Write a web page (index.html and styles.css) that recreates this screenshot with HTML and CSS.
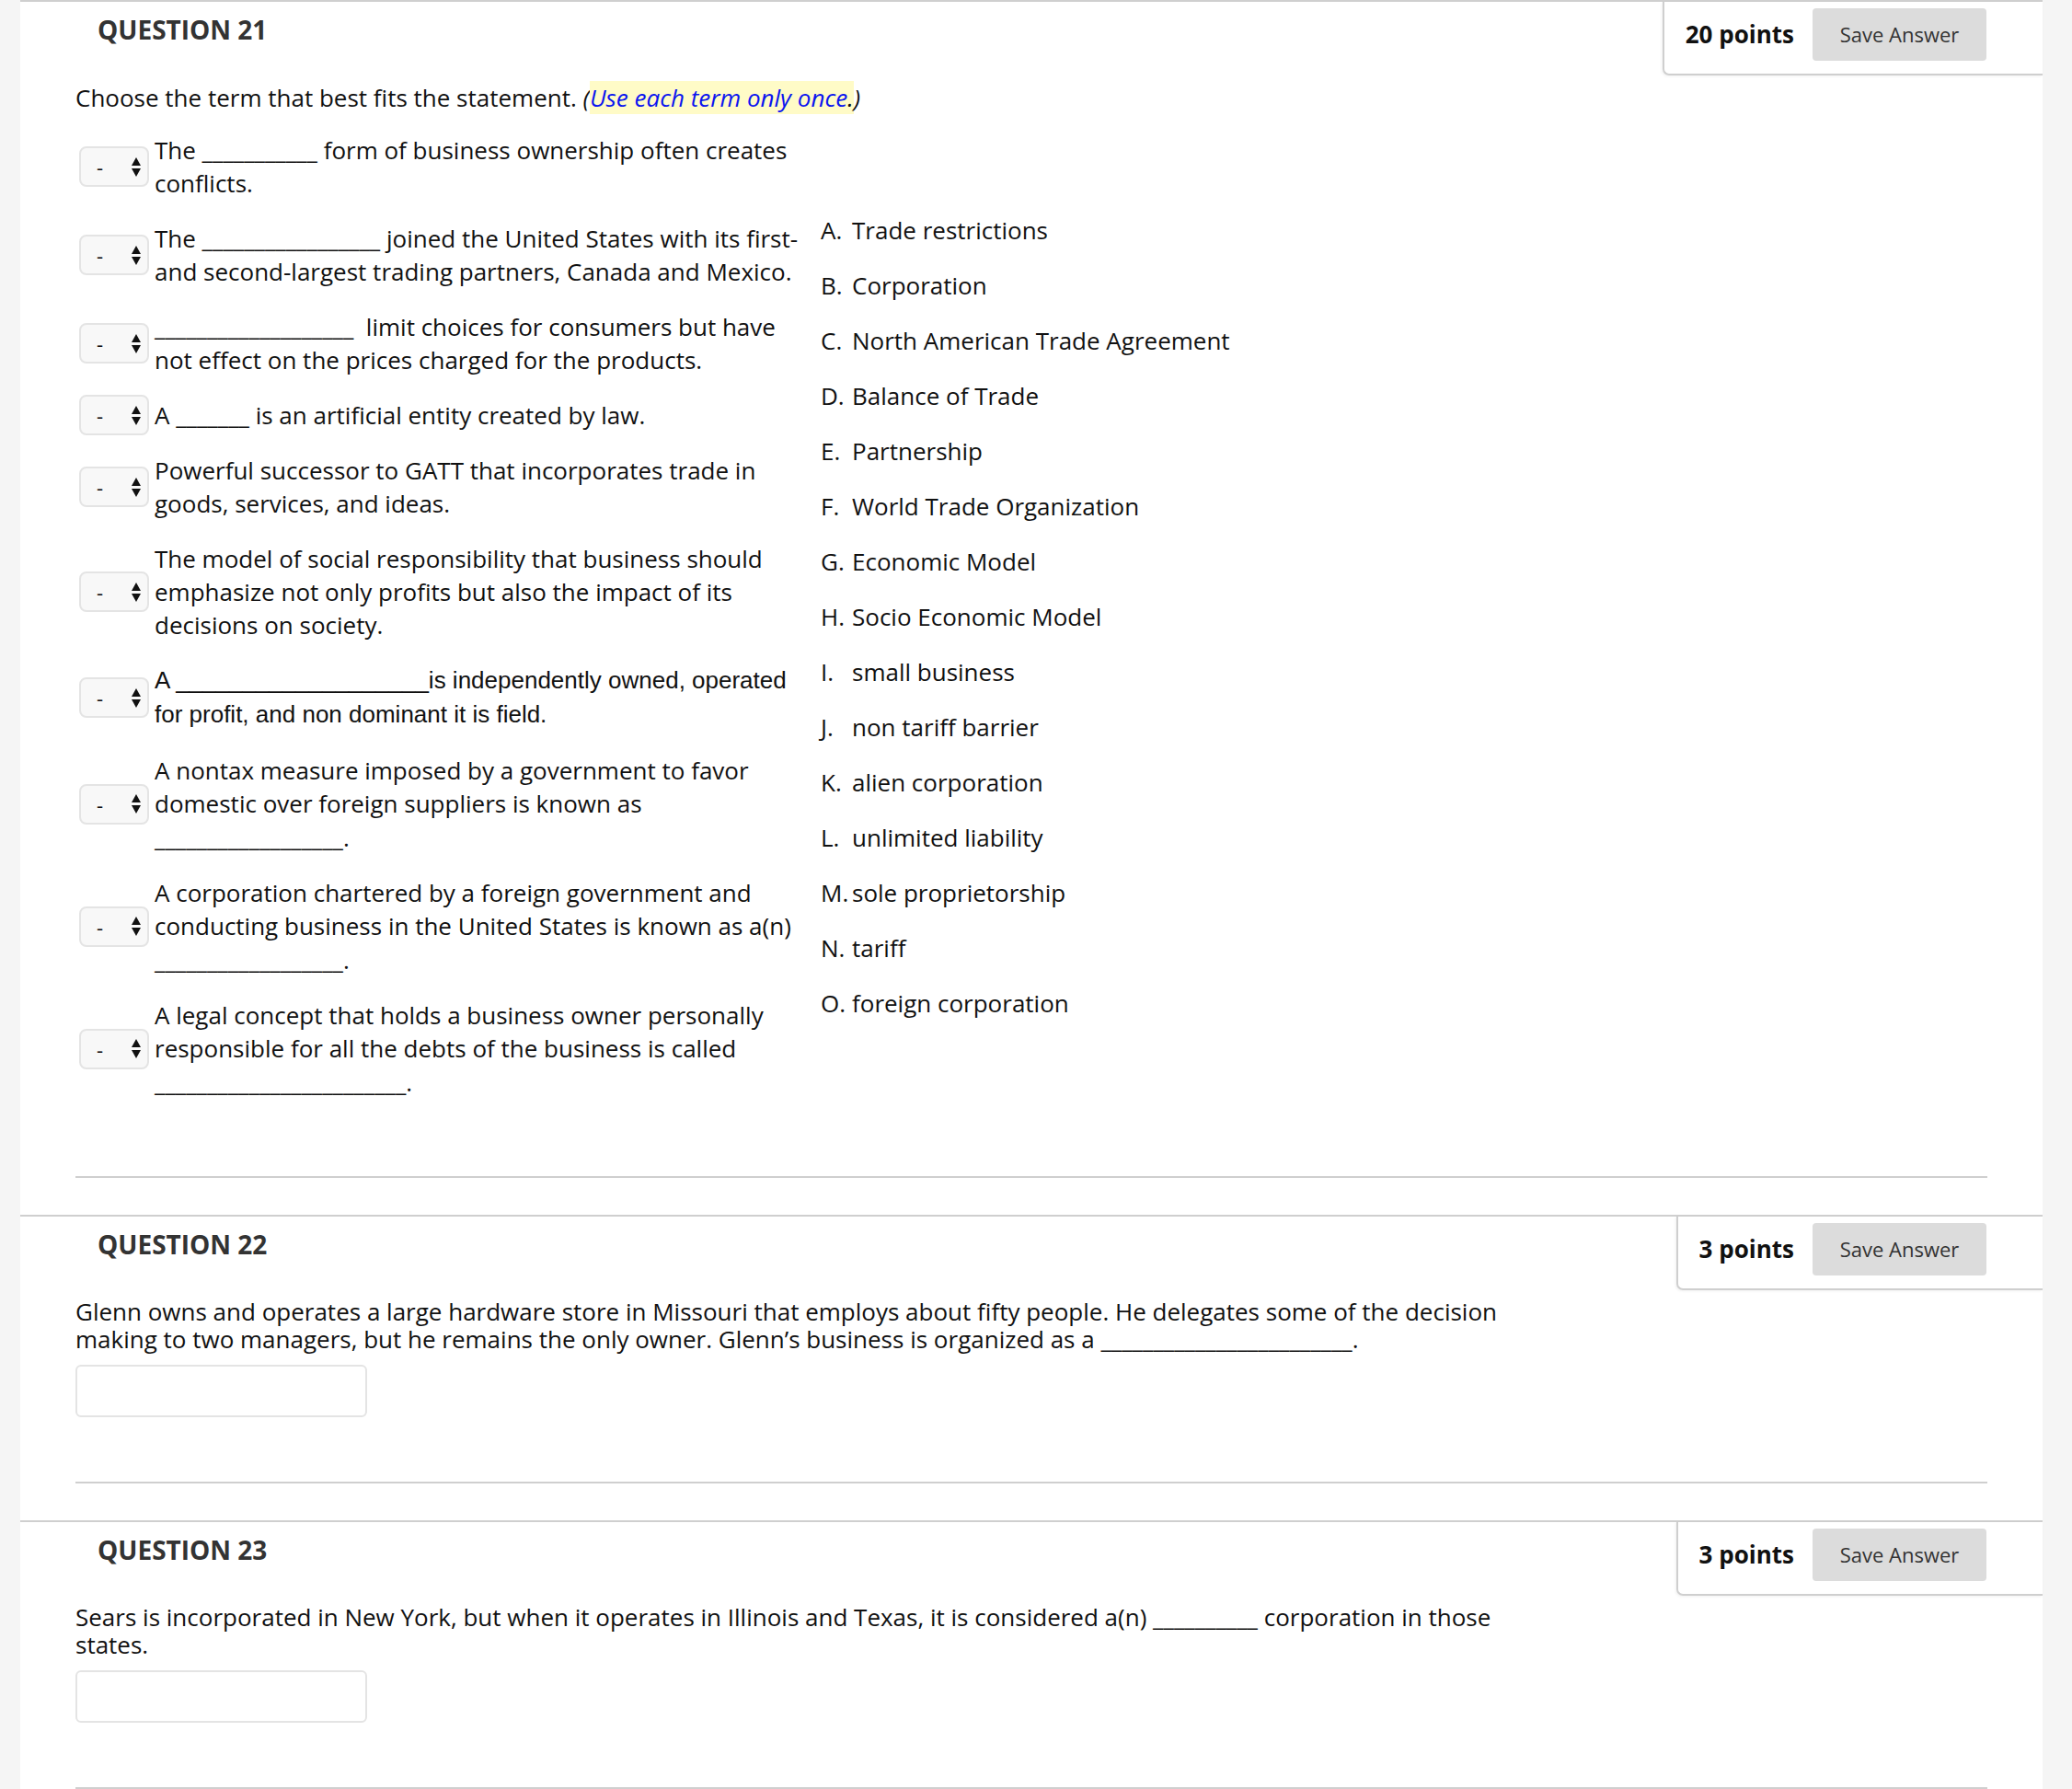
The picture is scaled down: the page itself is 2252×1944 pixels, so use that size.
FILE: index.html
```html
<!DOCTYPE html>
<html lang="en">
<head>
<meta charset="utf-8">
<title>Questions</title>
<link rel="stylesheet" href="styles.css">
</head>
<body>
<div class="page">

  <section class="question">
    <div class="q-head">
      <h3 class="q-title">QUESTION 21</h3>
      <div class="points-box">
        <span class="points">20 points</span>
        <span class="save-btn">Save Answer</span>
      </div>
    </div>
    <div class="q-body">
      <p class="instr">Choose the term that best fits the statement. <em>(<span class="hl"><a class="link" href="#">Use each term only once</a>.</span>)</em></p>

      <div class="match">
        <div class="prompts">
          <div class="prow">
            <span class="sel"><span class="dash">-</span><svg class="arr" width="12" height="23" viewBox="0 0 12 23"><path d="M6 1L11 10H1Z M1 13H11L6 22Z" fill="#111"/></svg></span>
            <div class="ptext">The ___________ form of business ownership often creates conflicts.</div>
          </div>
          <div class="prow">
            <span class="sel"><span class="dash">-</span><svg class="arr" width="12" height="23" viewBox="0 0 12 23"><path d="M6 1L11 10H1Z M1 13H11L6 22Z" fill="#111"/></svg></span>
            <div class="ptext">The _________________ joined the United States with its first-and second-largest trading partners, Canada and Mexico.</div>
          </div>
          <div class="prow">
            <span class="sel"><span class="dash">-</span><svg class="arr" width="12" height="23" viewBox="0 0 12 23"><path d="M6 1L11 10H1Z M1 13H11L6 22Z" fill="#111"/></svg></span>
            <div class="ptext">___________________&nbsp; limit choices for consumers but have not effect on the prices charged for the products.</div>
          </div>
          <div class="prow">
            <span class="sel"><span class="dash">-</span><svg class="arr" width="12" height="23" viewBox="0 0 12 23"><path d="M6 1L11 10H1Z M1 13H11L6 22Z" fill="#111"/></svg></span>
            <div class="ptext">A _______ is an artificial entity created by law.</div>
          </div>
          <div class="prow">
            <span class="sel"><span class="dash">-</span><svg class="arr" width="12" height="23" viewBox="0 0 12 23"><path d="M6 1L11 10H1Z M1 13H11L6 22Z" fill="#111"/></svg></span>
            <div class="ptext">Powerful successor to GATT that incorporates trade in goods, services, and ideas.</div>
          </div>
          <div class="prow">
            <span class="sel"><span class="dash">-</span><svg class="arr" width="12" height="23" viewBox="0 0 12 23"><path d="M6 1L11 10H1Z M1 13H11L6 22Z" fill="#111"/></svg></span>
            <div class="ptext">The model of social responsibility that business should emphasize not only profits but also the impact of its decisions on society.</div>
          </div>
          <div class="prow">
            <span class="sel"><span class="dash">-</span><svg class="arr" width="12" height="23" viewBox="0 0 12 23"><path d="M6 1L11 10H1Z M1 13H11L6 22Z" fill="#111"/></svg></span>
            <div class="ptext arial">A ___________________is independently owned, operated for profit, and non dominant it is field.</div>
          </div>
          <div class="prow">
            <span class="sel"><span class="dash">-</span><svg class="arr" width="12" height="23" viewBox="0 0 12 23"><path d="M6 1L11 10H1Z M1 13H11L6 22Z" fill="#111"/></svg></span>
            <div class="ptext">A nontax measure imposed by a government to favor domestic over foreign suppliers is known as <span class="blank-line">__________________.</span></div>
          </div>
          <div class="prow">
            <span class="sel"><span class="dash">-</span><svg class="arr" width="12" height="23" viewBox="0 0 12 23"><path d="M6 1L11 10H1Z M1 13H11L6 22Z" fill="#111"/></svg></span>
            <div class="ptext">A corporation chartered by a foreign government and conducting business in the United States is known as a(n) <span class="blank-line">__________________.</span></div>
          </div>
          <div class="prow">
            <span class="sel"><span class="dash">-</span><svg class="arr" width="12" height="23" viewBox="0 0 12 23"><path d="M6 1L11 10H1Z M1 13H11L6 22Z" fill="#111"/></svg></span>
            <div class="ptext">A legal concept that holds a business owner personally responsible for all the debts of the business is called <span class="blank-line">________________________.</span></div>
          </div>
        </div>

        <ol class="answers">
          <li><span class="let">A.</span><span>Trade restrictions</span></li>
          <li><span class="let">B.</span><span>Corporation</span></li>
          <li><span class="let">C.</span><span>North American Trade Agreement</span></li>
          <li><span class="let">D.</span><span>Balance of Trade</span></li>
          <li><span class="let">E.</span><span>Partnership</span></li>
          <li><span class="let">F.</span><span>World Trade Organization</span></li>
          <li><span class="let">G.</span><span>Economic Model</span></li>
          <li><span class="let">H.</span><span>Socio Economic Model</span></li>
          <li><span class="let">I.</span><span>small business</span></li>
          <li><span class="let">J.</span><span>non tariff barrier</span></li>
          <li><span class="let">K.</span><span>alien corporation</span></li>
          <li><span class="let">L.</span><span>unlimited liability</span></li>
          <li><span class="let">M.</span><span>sole proprietorship</span></li>
          <li><span class="let">N.</span><span>tariff</span></li>
          <li><span class="let">O.</span><span>foreign corporation</span></li>
        </ol>
      </div>
    </div>
    <hr class="sep sep-21">
  </section>

  <section class="question">
    <div class="q-head">
      <h3 class="q-title">QUESTION 22</h3>
      <div class="points-box">
        <span class="points">3 points</span>
        <span class="save-btn">Save Answer</span>
      </div>
    </div>
    <div class="q-body">
      <p class="qtext">Glenn owns and operates a large hardware store in Missouri that employs about fifty people. He delegates some of the decision making to two managers, but he remains the only owner. Glenn’s business is organized as a ________________________.</p>
      <input class="answer-input" type="text" aria-label="Answer">
    </div>
    <hr class="sep">
  </section>

  <section class="question">
    <div class="q-head">
      <h3 class="q-title">QUESTION 23</h3>
      <div class="points-box">
        <span class="points">3 points</span>
        <span class="save-btn">Save Answer</span>
      </div>
    </div>
    <div class="q-body">
      <p class="qtext">Sears is incorporated in New York, but when it operates in Illinois and Texas, it is considered a(n) __________ corporation in those states.</p>
      <input class="answer-input" type="text" aria-label="Answer">
    </div>
    <hr class="sep">
  </section>

</div>
</body>
</html>
```

FILE: styles.css
```css
html, body {
  margin: 0;
  padding: 0;
}
body {
  background: #f5f5f5;
  font-family: "Open Sans", "Noto Sans", sans-serif;
  color: #111;
  font-size: 26px;
}
.page {
  margin: 0 32px 0 22px;
  background: #fff;
  min-height: 1944px;
}
.question {
  border-top: 2px solid #cfcfcf;
  margin-top: 40px;
}
.question:first-child {
  margin-top: 0;
}
.q-head {
  display: flex;
  justify-content: space-between;
  align-items: flex-start;
  height: 81px;
}
.q-title {
  margin: 0;
  padding: 11px 0 0 84px;
  font-size: 28px;
  line-height: 38px;
  font-weight: 700;
  color: #333;
}
.points-box {
  display: flex;
  align-items: center;
  gap: 20px;
  height: 80px;
  box-sizing: border-box;
  padding: 0 61px 8px 23px;
  border-left: 2px solid #cfcfcf;
  border-bottom: 2px solid #cfcfcf;
  border-bottom-left-radius: 7px;
  box-shadow: -1px 1px 3px rgba(0,0,0,0.06);
}
.points {
  font-weight: 700;
  font-size: 26px;
  color: #111;
}
.save-btn {
  display: inline-flex;
  align-items: center;
  justify-content: center;
  width: 189px;
  height: 57px;
  background: #dcdcdc;
  border-radius: 4px;
  font-size: 22px;
  color: #333;
}
.q-body {
  padding-left: 60px;
}
.instr {
  margin: 5px 0 0;
  line-height: 36px;
}
.instr em {
  font-style: italic;
}
.hl {
  background: #fffbc7;
}
.link {
  color: #0a14f0;
  text-decoration: none;
}
.match {
  display: flex;
  align-items: center;
  margin-top: 21px;
}
.prompts {
  display: flex;
  flex-direction: column;
  gap: 24px;
  padding-left: 4px;
}
.prow {
  display: flex;
  align-items: center;
  gap: 6px;
}
.sel {
  flex: none;
  width: 76px;
  height: 44px;
  margin: -4px 0;
  box-sizing: border-box;
  border: 2px solid #e4e4e4;
  border-radius: 8px;
  background: #f8f8f8;
  display: flex;
  align-items: center;
  padding-left: 17px;
}
.dash {
  font-size: 22px;
  line-height: 1;
  width: 37px;
}
.arr {
  display: block;
}
.ptext {
  width: 708px;
  line-height: 36px;
}
.ptext.arial {
  font-family: "Liberation Sans", Arial, sans-serif;
  font-size: 26px;
  line-height: 37px;
}
.blank-line {
  display: inline-block;
  margin-top: 1px;
}
.answers {
  list-style: none;
  margin: 0 0 0 16px;
  padding: 0;
}
.answers li {
  display: flex;
  line-height: 36px;
  padding: 12px 0;
}
.let {
  width: 34px;
  flex: none;
}
.sep {
  border: 0;
  border-top: 2px solid #cfcfcf;
  margin: 70px 60px 0;
  height: 0;
}
.sep-21 {
  margin-top: 84px;
}
.qtext {
  margin: 7px 0 0;
  line-height: 30px;
  max-width: 1590px;
}
.answer-input {
  display: block;
  margin-top: 13px;
  width: 317px;
  height: 57px;
  box-sizing: border-box;
  border: 2px solid #e4e4e4;
  border-radius: 6px;
  background: #fff;
  font: inherit;
}
```
